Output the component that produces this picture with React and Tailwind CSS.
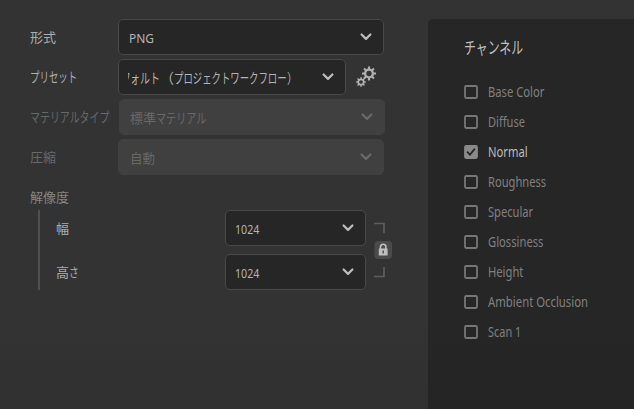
import React from 'react';

const JP = 'font-["Noto_Sans","Noto_Sans_CJK_JP",sans-serif]';

// Text run condensed horizontally; `w` reserves the width it takes up in the line.
function Run({ w, s, className = '', children }) {
  return (
    <span className={`inline-block shrink-0 whitespace-nowrap ${className}`} style={{ width: w }}>
      <span className="inline-block origin-left" style={{ transform: `scaleX(${s})` }}>{children}</span>
    </span>
  );
}

function Chevron({ color }) {
  return (
    <svg width="12" height="8" viewBox="0 0 12 8" fill="none" className="shrink-0">
      <path d="M1.6 1.5 6 5.9l4.4-4.4" stroke={color} strokeWidth="2.2" strokeLinecap="round" strokeLinejoin="round" />
    </svg>
  );
}

function Select({ className, disabled, children }) {
  const look = disabled
    ? 'bg-[#404040] border-[#404040] text-[#686868]'
    : 'bg-[#262626] border-[#484848] text-[#b4b4b4]';
  return (
    <div className={`flex items-center justify-between rounded-[5px] border-[1.5px] ${look} ${className}`}>
      <div className="flex min-w-0 overflow-hidden pt-px leading-5">{children}</div>
      <Chevron color={disabled ? '#686868' : '#bdbdbd'} />
    </div>
  );
}

function Row({ label, className = '', children }) {
  return (
    <div className={`flex h-10 items-center ${className}`}>
      <div className="w-[88px] shrink-0 leading-5">{label}</div>
      {children}
    </div>
  );
}

function Gear({ cx, cy, r, hole, tooth }) {
  return (
    <g transform={`translate(${cx} ${cy})`}>
      {[0, 45, 90, 135, 180, 225, 270, 315].map((a) => (
        <rect key={a} x={-tooth / 2} y={-r - tooth * 0.9} width={tooth} height={tooth * 1.5} transform={`rotate(${a})`} fill="#b0b0b0" />
      ))}
      <circle r={(r + hole) / 2} fill="none" stroke="#b0b0b0" strokeWidth={r - hole} />
    </g>
  );
}

const channels = [
  ['Base Color', 57, 0.83],
  ['Diffuse', 37, 0.82],
  ['Normal', 40, 0.83],
  ['Roughness', 58, 0.825],
  ['Specular', 46, 0.825],
  ['Glossiness', 56, 0.83],
  ['Height', 35, 0.83],
  ['Ambient Occlusion', 101, 0.84],
  ['Scan 1', 33, 0.81],
];

function Check({ on }) {
  return (
    <svg width="14" height="14" viewBox="0 0 14 14" fill="none" className="shrink-0">
      <rect x="1" y="1" width="12" height="12" rx="1.2" stroke={on ? '#8a8a8a' : '#777777'} strokeWidth="1.8" fill={on ? '#8a8a8a' : 'none'} />
      {on && <path d="m3.5 7.2 2.4 2.5 4.6-5.6" stroke="#262626" strokeWidth="1.8" strokeLinecap="round" />}
    </svg>
  );
}

export default function App() {
  return (
    <div className={`flex h-[409px] w-[634px] overflow-hidden bg-linear-to-b from-[#333333] from-80% to-[#303030] text-[13px] text-[#adadad] ${JP}`}>
      <div className="w-[428px] shrink-0 pt-[17px] pl-[30px]">
        <Row label="形式">
          <Select className="h-[36px] w-[266px] pr-[11px] pl-[10px]">
            <Run w={30} s={0.92}>PNG</Run>
          </Select>
        </Row>
        <Row label={<Run w={48} s={0.675} className="text-[14px]">プリセット</Run>}>
          <Select className="h-[36px] w-[228px] pr-[11px] pl-[9px]">
            <span className="flex w-[168px] overflow-hidden">
              <span className="-ml-[7px] flex text-[14px]">
                <Run w={9} s={0.69}>フ</Run>
                <Run w={30} s={0.71}>ォルト</Run>
                <Run w={14} s={1}>（</Run>
                <Run w={112.5} s={0.67}>プロジェクトワークフロー</Run>
                <Run w={10} s={0.75}>）</Run>
              </span>
            </span>
          </Select>
          <svg width="24" height="24" viewBox="0 0 24 24" className="ml-[9px] shrink-0">
            <Gear cx={14} cy={8.5} r={5.1} hole={2.7} tooth={2.1} />
            <Gear cx={6} cy={17} r={3.6} hole={1.8} tooth={1.4} />
          </svg>
        </Row>
        <Row className="text-[#686868]" label={<Run w={80} s={0.71} className="text-[14px]">マテリアルタイプ</Run>}>
          <Select disabled className="ml-px h-[36px] w-[266px] pr-[11px] pl-[10px]">
            <Run w={26} s={1}>標準</Run>
            <Run w={51} s={0.72} className="text-[14px]">マテリアル</Run>
          </Select>
        </Row>
        <Row className="text-[#686868]" label="圧縮">
          <Select disabled className="h-[36px] w-[266px] pr-[11px] pl-[11px]"><Run w={26} s={0.96}>自動</Run></Select>
        </Row>
        <div className="h-[33px] pt-[10px] leading-5 text-[#858585]">解像度</div>
        <div className="ml-[8px] flex h-[80px] items-center border-l-2 border-[#505050]">
          <div className="flex w-[185px] shrink-0 flex-col gap-[24px] pl-[16px] leading-5">
            <div>幅</div>
            <div className="flex">
              <Run w={13} s={1}>高</Run>
              <Run w={9} s={0.75}>さ</Run>
            </div>
          </div>
          <div className="flex shrink-0 flex-col gap-[8px]">
            <Select className="h-[36px] w-[141px] pr-[11px] pl-[9px]"><Run w={26} s={0.82}>1024</Run></Select>
            <Select className="h-[36px] w-[141px] pr-[11px] pl-[9px]"><Run w={26} s={0.82}>1024</Run></Select>
          </div>
          <svg width="22" height="60" viewBox="0 0 22 60" fill="none" className="ml-[5px] shrink-0">
            <path d="M3 3.5h10v9.500M3 56.500h10V47" stroke="#5e5e5e" strokeWidth="1.7" />
            <rect x="3.500" y="21" width="17.500" height="18" rx="4" fill="#4b4b4b" />
            <path d="M9.500 29v-2a2.700 2.700 0 0 1 5.400 0v2" stroke="#c0c0c0" strokeWidth="1.600" />
            <rect x="7.800" y="28.500" width="8.800" height="7" rx="0.600" fill="#c0c0c0" />
            <path d="M12.200 30.500v3" stroke="#555555" strokeWidth="1.500" />
          </svg>
        </div>
      </div>
      <div className="mt-[19px] grow rounded-tl-[5px] bg-linear-to-b from-[#262626] from-80% to-[#242424] pl-[36px]">
        <div className="pt-[17px] text-[17px] leading-6 text-[#c0c0c0]"><Run w={60} s={0.7}>チャンネル</Run></div>
        <div className="mt-[17px] text-[13.5px] text-[#808080]">
          {channels.map(([name, w, s]) => (
            <div key={name} className={`flex h-[30px] items-center gap-[10px] ${name === 'Normal' ? 'text-[#bcbcbc]' : ''}`}>
              <Check on={name === 'Normal'} />
              <Run w={w} s={s}>{name}</Run>
            </div>
          ))}
        </div>
      </div>
    </div>
  );
}
